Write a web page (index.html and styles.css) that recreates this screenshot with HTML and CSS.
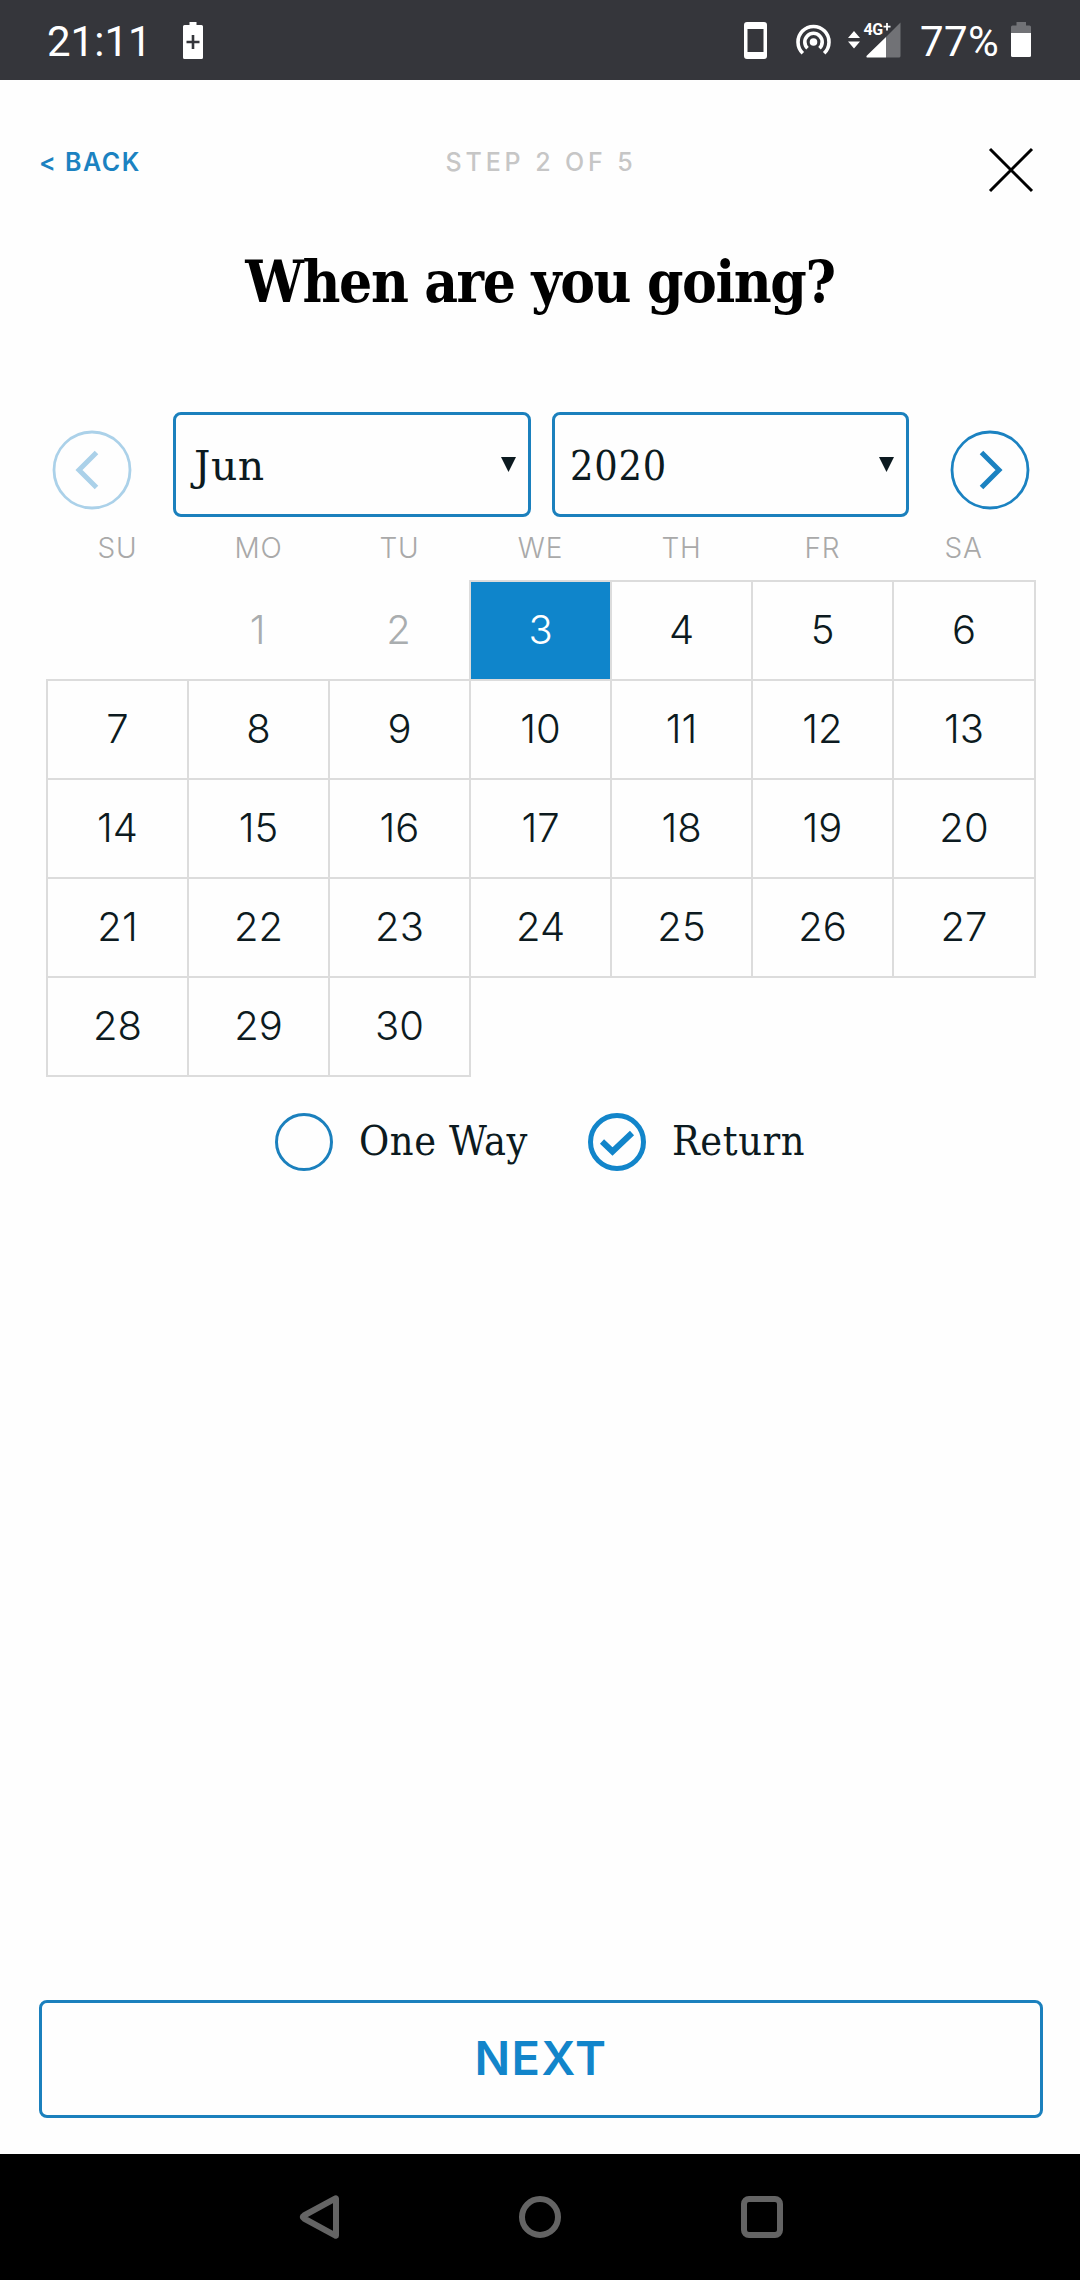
FILE: index.html
```html
<!DOCTYPE html>
<html lang="en">
<head>
<meta charset="utf-8">
<title>When are you going?</title>
<link rel="stylesheet" href="styles.css">
</head>
<body>
<div class="screen">
  <div class="status">
    <span class="clock">21:11</span>
    <svg class="saver" width="20" height="37" viewBox="0 0 20 37"><path fill="#fff" d="M6.500 0h7v3H18.500a1.500 1.500 0 0 1 1.500 1.500V35.500a1.500 1.500 0 0 1-1.500 1.500H1.500A1.500 1.500 0 0 1 0 35.500V4.500A1.500 1.500 0 0 1 1.500 3h5z"/><path d="M10 13v14M3.500 20h13" stroke="#35363b" stroke-width="2.600"/></svg>
    <svg class="indicators" width="158" height="40" viewBox="0 0 158 40">
      <path fill="#fff" fill-rule="evenodd" d="M3 2H20a3 3 0 0 1 3 3V36a3 3 0 0 1-3 3H3a3 3 0 0 1-3-3V5a3 3 0 0 1 3-3zM3.500 9V32H19.500V9z"/>
      <g fill="none" stroke="#fff" stroke-width="3.600"><path d="M58.800 33.200A15.500 15.500 0 1 1 80.200 33.200"/><path d="M63.500 28.300A8.700 8.700 0 1 1 75.500 28.300"/></g>
      <circle cx="69.500" cy="22" r="3.800" fill="#fff"/>
      <path fill="#fff" d="M104 18l6-7 6 7zM104 21.500l6 7 6-7z"/>
      <path fill="#717276" d="M156.500 2.500V36a1.500 1.500 0 0 1-1.500 1.500H142V17z"/>
      <path fill="#fff" d="M142 17V37.500H123.500a1 1 0 0 1-.8-1.700z"/>
      <text x="119.500" y="14.800" class="net">4G</text>
      <path d="M143 3v7.500M139.500 6.600h7" stroke="#fff" stroke-width="1.800"/>
    </svg>
    <span class="percent">77%</span>
    <svg class="battery" width="20" height="35" viewBox="0 0 20 35"><path fill="#717276" d="M5.500 0h9.500v3.500h3.500a1.500 1.500 0 0 1 1.500 1.500v8H0V5a1.500 1.500 0 0 1 1.500-1.500h4z"/><path fill="#fff" d="M0 11H20V33.500a1.500 1.500 0 0 1-1.500 1.500H1.500A1.500 1.500 0 0 1 0 33.500z"/></svg>
  </div>

  <div class="topbar">
    <span class="back">&lt; BACK</span>
    <span class="step">STEP 2 OF 5</span>
    <svg class="close" width="46" height="46" viewBox="0 0 46 46"><path d="M2 2L44 44M44 2L2 44" stroke="#000" stroke-width="3"/></svg>
  </div>
  <h1 class="title">When are you going?</h1>

  <div class="picker">
    <svg class="prev" width="80" height="80" viewBox="0 0 80 80" fill="none" stroke="#abd1e9"><circle cx="40" cy="40" r="38" stroke-width="2.800"/><path d="M44.500 22.500L27 40L44.500 57.500" stroke-width="5"/></svg>
    <div class="select month"><span>Jun</span><i class="caret"></i></div>
    <div class="select year"><span>2020</span><i class="caret"></i></div>
    <svg class="next" width="80" height="80" viewBox="0 0 80 80" fill="none" stroke="#1b82c1"><circle cx="40" cy="40" r="38" stroke-width="2.800"/><path d="M31.500 22.500L49 40L31.500 57.500" stroke-width="5"/></svg>
  </div>

  <div class="weekdays"><span>SU</span><span>MO</span><span>TU</span><span>WE</span><span>TH</span><span>FR</span><span>SA</span></div>
  <div class="days">
    <span class="blank"></span><span class="past">1</span><span class="past">2</span><span class="day chosen">3</span><span class="day">4</span><span class="day">5</span><span class="day">6</span>
    <span class="day">7</span><span class="day">8</span><span class="day">9</span><span class="day">10</span><span class="day">11</span><span class="day">12</span><span class="day">13</span>
    <span class="day">14</span><span class="day">15</span><span class="day">16</span><span class="day">17</span><span class="day">18</span><span class="day">19</span><span class="day">20</span>
    <span class="day">21</span><span class="day">22</span><span class="day">23</span><span class="day">24</span><span class="day">25</span><span class="day">26</span><span class="day">27</span>
    <span class="day">28</span><span class="day">29</span><span class="day">30</span>
  </div>

  <div class="trip">
    <svg width="58" height="58" viewBox="0 0 58 58"><circle cx="29" cy="29" r="27.500" fill="none" stroke="#1b80bd" stroke-width="3"/></svg>
    <span class="oneway">One Way</span>
    <svg width="58" height="58" viewBox="0 0 58 58" fill="none" stroke="#1285ca"><circle cx="29" cy="29" r="26.500" stroke-width="5"/><path d="M14 28.500L24.500 38.500L44 20" stroke-width="6"/></svg>
    <span class="return">Return</span>
  </div>

  <div class="submit">NEXT</div>
  <div class="navbar">
    <svg width="44" height="46" viewBox="0 0 44 46"><path d="M40 4.500V41.500Q40 42 39.500 41.700L8 24.500Q5.500 23 8 21.500L39.500 4.300Q40 4 40 4.500z"/></svg>
    <svg width="44" height="46" viewBox="0 0 44 46"><circle cx="22" cy="23" r="18"/></svg>
    <svg width="44" height="46" viewBox="0 0 44 46"><rect x="4" y="5" width="36" height="36" rx="5"/></svg>
  </div>
</div>
</body>
</html>
```
FILE: styles.css
```css
* { box-sizing: border-box; }
body { margin: 0; background: #fefefe; }
svg { display: block; flex: none; }
.screen { width: 1080px; height: 2280px; display: flex; flex-direction: column; font-family: Inter, "Open Sans", sans-serif; color: #0c1a20; }

.status { height: 80px; background: #35363b; color: #fff; display: flex; align-items: flex-start; font: 42px/52px Roboto, sans-serif; padding: 16px 49px 0 47px; }
.clock { width: 136px; white-space: nowrap; }
.saver { margin-top: 6px; }
.indicators { margin: 4px 0 0 541px; }
.net { font: 700 16px Roboto, sans-serif; fill: #fff; letter-spacing: -0.5px; }
.percent { margin-left: 18px; width: 91px; white-space: nowrap; letter-spacing: 0.4px; }
.battery { margin-top: 6px; }

.topbar { height: 142px; padding: 66px 46px 0 39px; display: grid; grid-template-columns: 1fr auto 1fr; align-items: start; font-size: 25px; line-height: 32px; }
.back { color: #1b82c1; font-weight: 600; letter-spacing: 1.5px; }
.step { color: #c6c6c6; font-weight: 500; letter-spacing: 3.9px; padding-left: 9px; }
.close { justify-self: end; margin-top: 1px; }
.title { margin: 22px 0 0; height: 168px; text-align: center; font: 700 58px/76px "DejaVu Serif Condensed", "DejaVu Serif", serif; color: #000; letter-spacing: -1.4px; white-space: nowrap; }

.picker { height: 105px; padding: 0 50px 0 52px; display: flex; align-items: flex-start; }
.prev, .next { margin-top: 18px; }
.prev { margin-right: 41px; }
.next { margin-left: 41px; }
.select { height: 105px; border: 3px solid #1b80bd; border-radius: 8px; padding: 0 12px 0 15px; display: flex; justify-content: space-between; font: 41px/102px "DejaVu Serif Condensed", "DejaVu Serif", serif; }
.month { width: 358px; padding-left: 18px; font-family: "DejaVu Serif", serif; letter-spacing: 0.5px; }
.year { width: 357px; margin-left: 21px; letter-spacing: 0.8px; }
.caret { margin-top: 42px; width: 15px; height: 15px; background: #0c1a20; clip-path: polygon(0 0, 100% 0, 50% 100%); }

.weekdays { height: 63px; margin: 0 45px 0 47px; padding-top: 15px; display: grid; grid-template-columns: repeat(7, 141px); text-align: center; font-size: 28px; line-height: 32px; color: #a9a9a9; font-weight: 300; letter-spacing: 0.8px; }
.days { margin: 0 43px 0 46px; display: grid; grid-template-columns: repeat(7, 141px); grid-auto-rows: 99px; height: 497px; text-align: center; font-size: 40px; line-height: 98px; font-weight: 350; }
.day { border: 2px solid #dcdcdc; width: 143px; height: 101px; line-height: 95px; }
.day:nth-child(7n) { width: 144px; }
.past { color: #a9adaf; line-height: 99px; }
.chosen { color: #fff; background: #0f85cb; }

.trip { margin-top: 36px; height: 58px; padding-left: 275px; display: flex; align-items: center; font: 41px/56px "DejaVu Serif Condensed", "DejaVu Serif", serif; letter-spacing: 0.6px; white-space: nowrap; }
.oneway, .return { padding-bottom: 3px; }
.oneway { margin-left: 26px; width: 229px; }
.return { margin-left: 26px; }

.submit { margin: auto 37px 36px 39px; height: 118px; border: 3px solid #1b80bd; border-radius: 8px; text-align: center; font-size: 47px; line-height: 110px; font-weight: 600; letter-spacing: 1.5px; color: #1285ca; }
.navbar { height: 126px; background: #000; display: flex; justify-content: center; align-items: center; gap: 178px; }
.navbar svg { fill: none; stroke: #646464; stroke-width: 6; stroke-linejoin: round; }
```
